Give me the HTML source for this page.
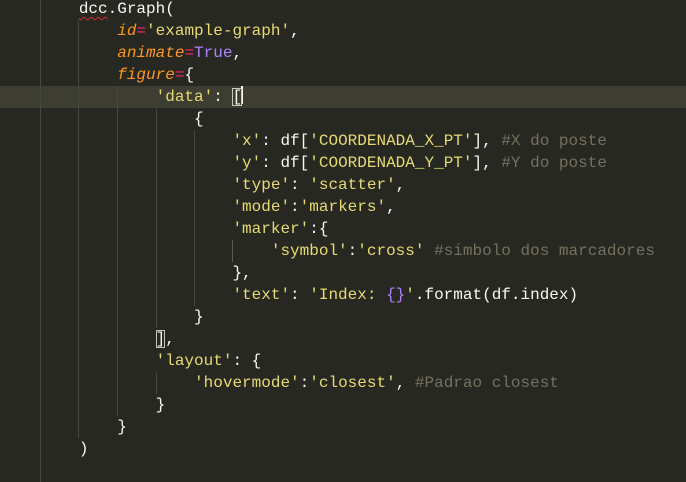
<!DOCTYPE html>
<html><head><meta charset="utf-8"><style>
html,body{margin:0;padding:0;background:#272822;width:686px;height:463px;overflow:hidden}
.c{position:absolute;left:0;top:-2px;width:686px;font-family:"Liberation Mono","DejaVu Sans Mono",monospace;font-size:16px;color:#f8f8f2}
.l{position:relative;height:22px;line-height:22px;white-space:pre;padding-left:2px}
.hl{background:#3e3d32}
.g{position:absolute;top:0;width:1px;height:22px;background:#46473f}
.y{color:#e6db74}.o{color:#fd971f;font-style:italic}.p{color:#f92672}.v{color:#ae81ff}.m{color:#75715e}
.sq{text-decoration:underline wavy #d0302a;text-decoration-thickness:1px;text-underline-offset:3px}
.bx{outline:1px solid #c8c8c0;outline-offset:-1px}
.cur{display:inline-block;width:2px;height:18px;background:#f8f8f0;vertical-align:-3px;margin-left:-1px}
</style></head><body><div class="c">
<div class="l"><span class="g" style="left:40px"></span>        <span class="sq">dcc</span>.Graph(</div>
<div class="l"><span class="g" style="left:40px"></span><span class="g" style="left:78px"></span>            <span class="o">id</span><span class="p">=</span><span class="y">'example-graph'</span>,</div>
<div class="l"><span class="g" style="left:40px"></span><span class="g" style="left:78px"></span>            <span class="o">animate</span><span class="p">=</span><span class="v">True</span>,</div>
<div class="l"><span class="g" style="left:40px"></span><span class="g" style="left:78px"></span>            <span class="o">figure</span><span class="p">=</span>{</div>
<div class="l hl"><span class="g" style="left:40px"></span><span class="g" style="left:78px"></span><span class="g" style="left:117px"></span>                <span class="y">'data'</span>: <span class="bx">[</span><span class="cur"></span></div>
<div class="l"><span class="g" style="left:40px"></span><span class="g" style="left:78px"></span><span class="g" style="left:117px"></span><span class="g" style="left:156px"></span>                    {</div>
<div class="l"><span class="g" style="left:40px"></span><span class="g" style="left:78px"></span><span class="g" style="left:117px"></span><span class="g" style="left:156px"></span><span class="g" style="left:194px"></span>                        <span class="y">'x'</span>: df[<span class="y">'COORDENADA_X_PT'</span>], <span class="m">#X do poste</span></div>
<div class="l"><span class="g" style="left:40px"></span><span class="g" style="left:78px"></span><span class="g" style="left:117px"></span><span class="g" style="left:156px"></span><span class="g" style="left:194px"></span>                        <span class="y">'y'</span>: df[<span class="y">'COORDENADA_Y_PT'</span>], <span class="m">#Y do poste</span></div>
<div class="l"><span class="g" style="left:40px"></span><span class="g" style="left:78px"></span><span class="g" style="left:117px"></span><span class="g" style="left:156px"></span><span class="g" style="left:194px"></span>                        <span class="y">'type'</span>: <span class="y">'scatter'</span>,</div>
<div class="l"><span class="g" style="left:40px"></span><span class="g" style="left:78px"></span><span class="g" style="left:117px"></span><span class="g" style="left:156px"></span><span class="g" style="left:194px"></span>                        <span class="y">'mode'</span>:<span class="y">'markers'</span>,</div>
<div class="l"><span class="g" style="left:40px"></span><span class="g" style="left:78px"></span><span class="g" style="left:117px"></span><span class="g" style="left:156px"></span><span class="g" style="left:194px"></span>                        <span class="y">'marker'</span>:{</div>
<div class="l"><span class="g" style="left:40px"></span><span class="g" style="left:78px"></span><span class="g" style="left:117px"></span><span class="g" style="left:156px"></span><span class="g" style="left:194px"></span><span class="g" style="left:232px;background:#5a5b53"></span>                            <span class="y">'symbol'</span>:<span class="y">'cross'</span> <span class="m">#simbolo dos marcadores</span></div>
<div class="l"><span class="g" style="left:40px"></span><span class="g" style="left:78px"></span><span class="g" style="left:117px"></span><span class="g" style="left:156px"></span><span class="g" style="left:194px"></span>                        },</div>
<div class="l"><span class="g" style="left:40px"></span><span class="g" style="left:78px"></span><span class="g" style="left:117px"></span><span class="g" style="left:156px"></span><span class="g" style="left:194px"></span>                        <span class="y">'text'</span>: <span class="y">'Index: </span><span class="v">{}</span><span class="y">'</span>.format(df.index)</div>
<div class="l"><span class="g" style="left:40px"></span><span class="g" style="left:78px"></span><span class="g" style="left:117px"></span><span class="g" style="left:156px"></span>                    }</div>
<div class="l"><span class="g" style="left:40px"></span><span class="g" style="left:78px"></span><span class="g" style="left:117px"></span>                <span class="bx">]</span>,</div>
<div class="l"><span class="g" style="left:40px"></span><span class="g" style="left:78px"></span><span class="g" style="left:117px"></span>                <span class="y">'layout'</span>: {</div>
<div class="l"><span class="g" style="left:40px"></span><span class="g" style="left:78px"></span><span class="g" style="left:117px"></span><span class="g" style="left:156px"></span>                    <span class="y">'hovermode'</span>:<span class="y">'closest'</span>, <span class="m">#Padrao closest</span></div>
<div class="l"><span class="g" style="left:40px"></span><span class="g" style="left:78px"></span><span class="g" style="left:117px"></span>                }</div>
<div class="l"><span class="g" style="left:40px"></span><span class="g" style="left:78px"></span>            }</div>
<div class="l"><span class="g" style="left:40px"></span>        )</div>
<div class="l"><span class="g" style="left:40px"></span></div>
</div></body></html>
